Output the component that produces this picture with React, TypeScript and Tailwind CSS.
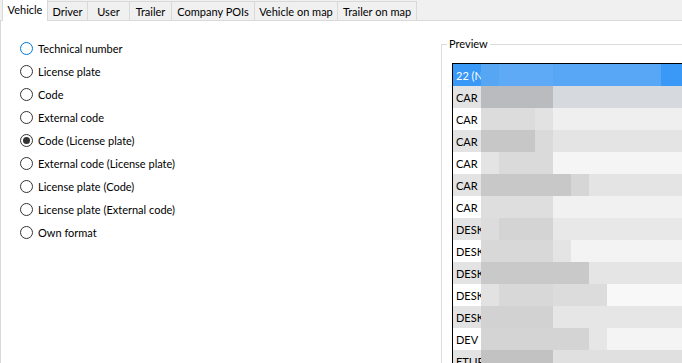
const tabs = [
  { label: 'Vehicle', w: 'w-[46px]' },
  { label: 'Driver', w: 'w-[40px]' },
  { label: 'User', w: 'w-[42px]' },
  { label: 'Trailer', w: 'w-[42px]' },
  { label: 'Company POIs', w: 'w-[83px]' },
  { label: 'Vehicle on map', w: 'w-[83px]' },
  { label: 'Trailer on map', w: 'w-[79px]' },
];

const options = [
  'Technical number',
  'License plate',
  'Code',
  'External code',
  'Code (License plate)',
  'External code (License plate)',
  'License plate (Code)',
  'License plate (External code)',
  'Own format',
];

// blurred preview rows: first-column text, then mosaic blocks [width, colour]
const rows: { text: string; blocks: [number, string][] }[] = [
  { text: '22 (N', blocks: [[18, '#57a6f4'], [54, '#5eaaf6'], [108, '#58a7f7'], [30, '#3a98f6']] },
  { text: 'CAR', blocks: [[72, '#b9bbbe'], [140, '#d6dadf']] },
  { text: 'CAR', blocks: [[54, '#dcdcdc'], [18, '#e2e2e2'], [140, '#efefef']] },
  { text: 'CAR', blocks: [[54, '#c7c7c7'], [18, '#dadada'], [140, '#e4e4e4']] },
  { text: 'CAR', blocks: [[18, '#e4e4e4'], [54, '#dadada'], [140, '#f5f5f5']] },
  { text: 'CAR', blocks: [[90, '#c8c8c8'], [18, '#d6d6d6'], [104, '#e4e4e4']] },
  { text: 'CAR', blocks: [[72, '#dedede'], [140, '#f1f1f1']] },
  { text: 'DESK', blocks: [[18, '#dcdcdc'], [54, '#d4d4d4'], [140, '#e8e8e8']] },
  { text: 'DESK', blocks: [[72, '#d8d8d8'], [18, '#e4e4e4'], [122, '#f3f3f3']] },
  { text: 'DESK', blocks: [[108, '#c9c9c9'], [104, '#e5e5e5']] },
  { text: 'DESK', blocks: [[18, '#e2e2e2'], [54, '#d8d8d8'], [54, '#dcdcdc'], [86, '#f8f8f8']] },
  { text: 'DESK', blocks: [[72, '#d2d2d2'], [140, '#e6e6e6']] },
  { text: 'DEV E', blocks: [[108, '#d4d4d4'], [18, '#e6e6e6'], [86, '#f4f4f4']] },
  { text: 'ETLIP', blocks: [[72, '#c2c2c2'], [140, '#e0e0e0']] },
];

function Radio({ label, index }: { label: string; index: number }) {
  const focused = index === 0;
  const checked = index === 4;
  return (
    <div className="flex h-[23px] items-center gap-[5px]">
      <span
        className={`flex h-[13px] w-[13px] shrink-0 items-center justify-center rounded-full border bg-white ${
          focused ? 'border-[#0078d7]' : 'border-[#333333]'
        }`}
      >
        {checked && <span className="h-[7px] w-[7px] rounded-full bg-[#333333]" />}
      </span>
      <span className="whitespace-nowrap text-black">{label}</span>
    </div>
  );
}

export default function App() {
  return (
    <div className="h-[363px] w-[682px] overflow-hidden bg-white font-['Lato','Liberation_Sans',sans-serif] text-[11px] leading-none">
      <div className="flex h-[21px] items-end border-b border-[#d9d9d9] bg-[#f0f0f0] pl-[2px]">
        {tabs.map((tab, i) =>
          i === 0 ? (
            <div
              key={tab.label}
              className={`relative z-10 mb-[-1px] flex h-[22px] shrink-0 items-center justify-center whitespace-nowrap border-x border-t border-[#d9d9d9] bg-white pb-[3px] text-black ${tab.w}`}
            >
              {tab.label}
            </div>
          ) : (
            <div
              key={tab.label}
              className={`flex h-[19px] shrink-0 items-center justify-center whitespace-nowrap border-r border-t border-[#d9d9d9] pt-[1px] text-black ${tab.w}`}
            >
              {tab.label}
            </div>
          ),
        )}
      </div>

      <div className="flex h-[342px] border-l border-[#d9d9d9]">
        <div className="w-[440px] shrink-0 pl-[19px] pt-[16px]">
          {options.map((o, i) => (
            <Radio key={o} label={o} index={i} />
          ))}
        </div>

        <div className="relative mt-[23px] min-w-0 flex-1 border-l border-t border-[#dcdcdc] pl-[10px] pt-[18px]">
          <span className="absolute left-[5px] top-[-7px] bg-white px-[2px] text-black">Preview</span>
          <div className="overflow-hidden border-l border-t border-black">
            {rows.map((r, i) => {
              const selected = i === 0;
              const gray = i % 2 === 1;
              return (
                <div
                  key={i}
                  className={`flex h-[22px] ${selected ? 'bg-[#3a98f6]' : gray ? 'bg-[#e3e3e3]' : 'bg-white'}`}
                >
                  <div
                    className={`flex w-[28px] shrink-0 items-center overflow-hidden whitespace-nowrap pl-[3px] ${
                      selected ? 'text-white' : 'text-black'
                    }`}
                  >
                    {r.text}
                  </div>
                  <div className="flex flex-1">
                    {r.blocks.map(([w, c], j) => (
                      <div key={j} className="h-full shrink-0" style={{ width: w, backgroundColor: c }} />
                    ))}
                  </div>
                </div>
              );
            })}
          </div>
        </div>
      </div>
    </div>
  );
}
